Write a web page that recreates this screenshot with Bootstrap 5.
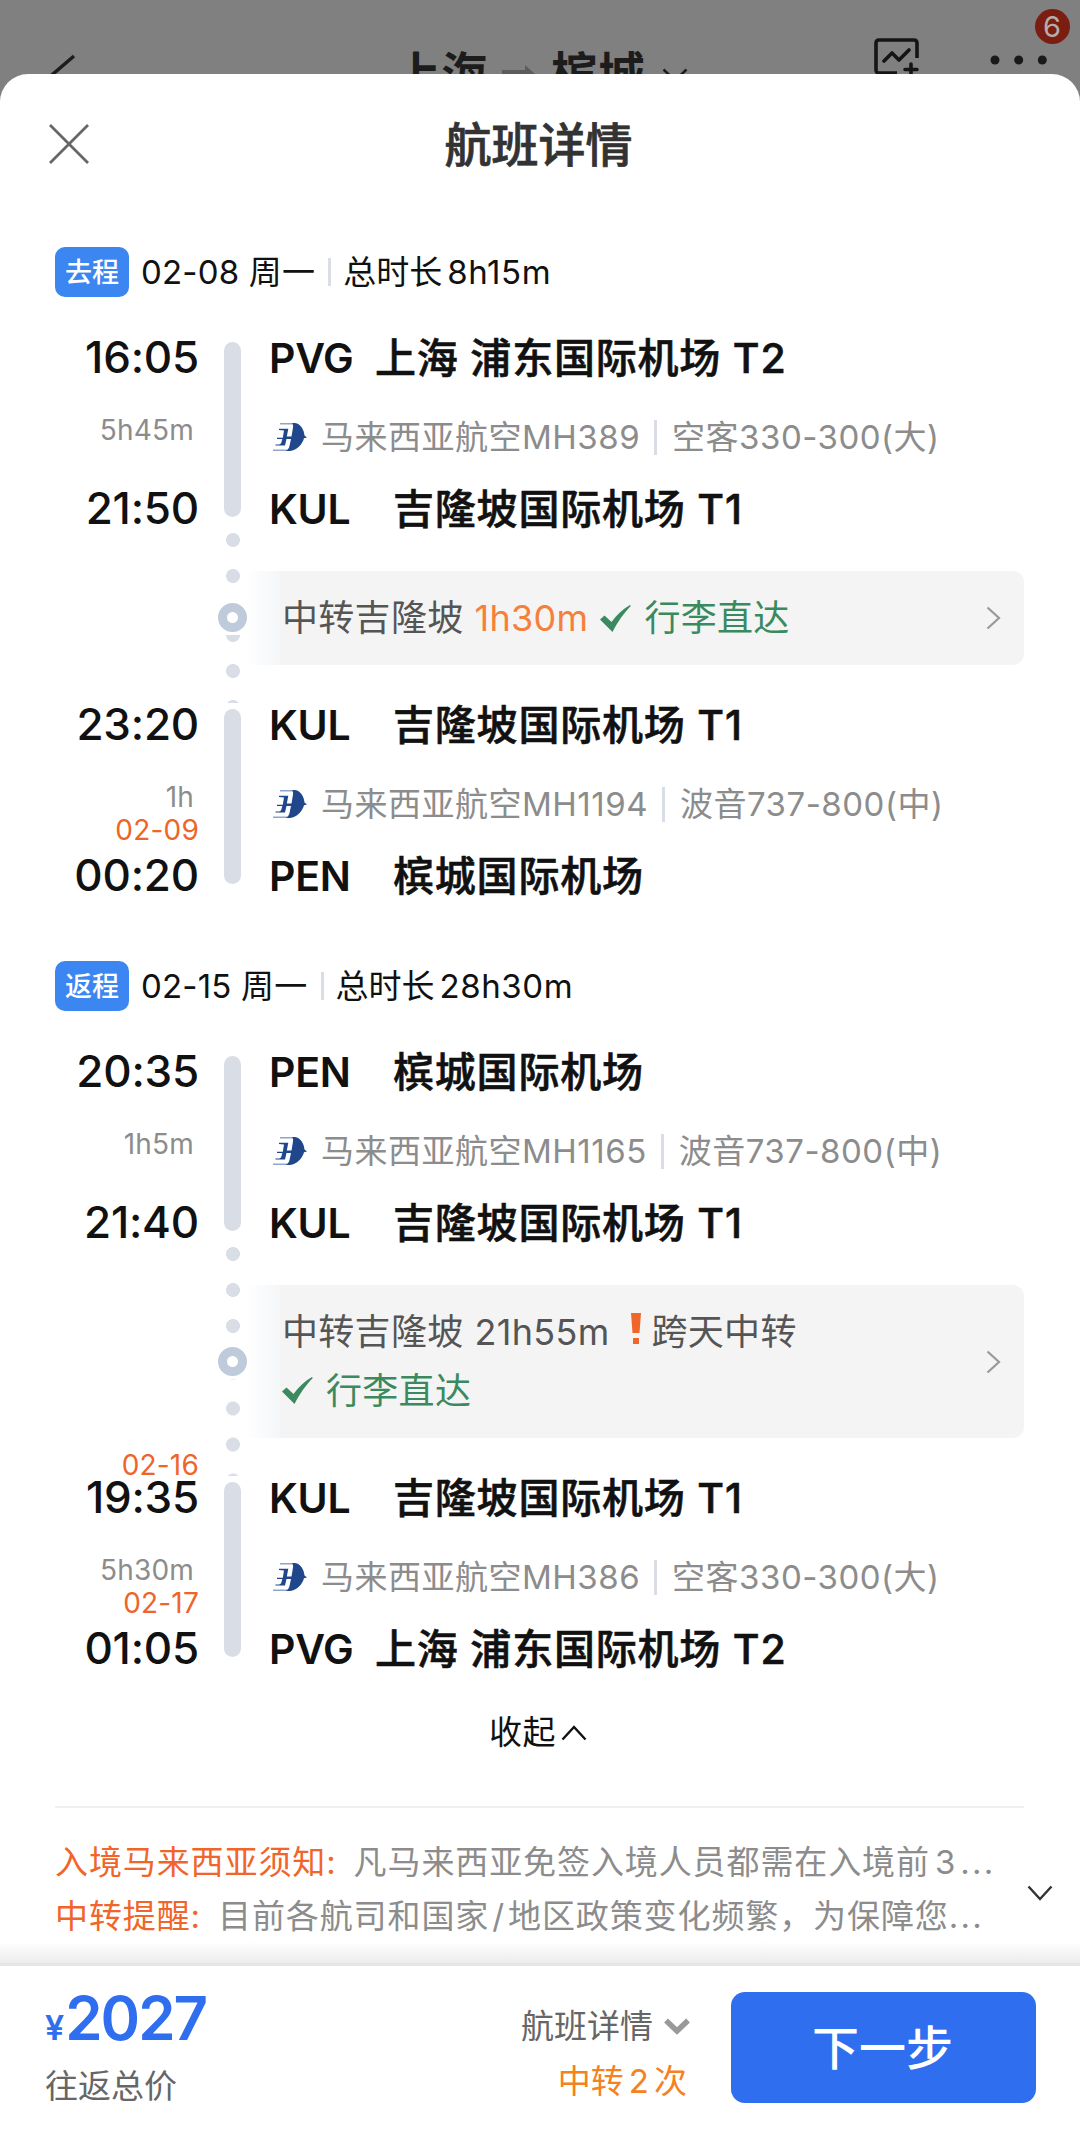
<!DOCTYPE html>
<html lang="zh-CN">
<head>
<meta charset="utf-8">
<meta name="viewport" content="width=device-width, initial-scale=1">
<title>航班详情</title>
<link href="https://cdn.jsdelivr.net/npm/bootstrap@5.3.0/dist/css/bootstrap.min.css" rel="stylesheet">
<style>
body{background:#808080;font-family:Inter,"Noto Sans CJK SC",sans-serif;color:#111;width:1080px;height:2130px;overflow:hidden;line-height:1}
svg{display:block;flex:none}
.topbar{height:74px}
.back{margin:54px 0 0 49px}
.topbar .route{font-size:47px;line-height:46px;color:#1c1c1c;font-weight:600;padding-top:51px;white-space:nowrap;margin-left:315px}
.to-arrow{margin:14px 15px 0 14px}
.route-caret{margin:17px 0 0 17px}
.watch{margin:37px 63px 0 0}
.more-dots{margin:54px 32px 0 0}
.count-dot{width:35px;height:35px;right:10.5px;top:9px;background:#7b1d10;color:#b5adab;font-size:29px}
.sheet{height:2056px;border-radius:28px 28px 0 0}
.sheet>*{flex-shrink:0}
.sheet-head{height:173px;padding:50px 0 0 49px}
.sheet-title{font-size:47px;font-weight:500;color:#333;line-height:42px;width:982px;padding-right:49px;text-align:center;margin:0 0 0 -17px;-webkit-text-stroke:.7px #333}
.trip-head{height:50px;padding-left:55px;font-size:33px}
.trip-back{margin-top:77px}
.trip-tag{width:74px;height:50px;border-radius:10px;background:#3b86f0;color:#fff;font-size:27px;font-weight:500;margin-right:12px}
.vline{width:3px;height:28px;background:#d9dee6}
.trip-head .vline{margin:0 12px 0 13px}
.day{letter-spacing:.2px}
.total{margin-left:5px;letter-spacing:.6px}
.leg{height:175px}
.leg-first{margin-top:45px}
.time-col{width:199px;font-size:44px;font-weight:500;white-space:nowrap;letter-spacing:-.2px}
.row-a{height:30px;line-height:31px}
.row-b{height:18px;line-height:19px}
.dur{font-size:28px;line-height:33px;font-weight:400;color:#8c8c8c;padding-top:42px;letter-spacing:.2px}
.dur span{padding-right:5px}
.dated{color:#ee6529;display:block}
.rail{width:67px;position:relative;z-index:1}
.bar{width:17px;height:175px;border-radius:9px;background:#d9dee6}
.port{font-size:41px;font-weight:500;padding-left:3px;white-space:nowrap;letter-spacing:.8px;-webkit-text-stroke:.6px #111}
.port.row-a{line-height:32px}
.port.row-b{line-height:20px}
.port b{display:inline-block;font-weight:600;width:106px;letter-spacing:-.3px;-webkit-text-stroke:0}
.port.wide b{width:124px}
.airline{font-size:33px;color:#8c8c8c;padding:3px 0 0 7px;white-space:nowrap;letter-spacing:.5px}
.airline svg{margin-right:14px}
.airline .vline{height:35px;margin:0 15px 0 14px}
.layover{height:192px}
.layover.tall{height:251px}
.dots{width:14px;flex:1 1 0;background-image:radial-gradient(circle at 7px 18px,#d9dee6 6.6px,transparent 7.3px);background-size:14px 36px}
.dots-a{background-position:0 -10px}
.dots-b{background-position:0 calc(100% + 22px)}
.layover .rail{padding:15px 0 6px}
.ring{width:29px;height:29px;border:9px solid #bfcadb;border-radius:50%;margin:3px 0}
.stop-box{margin:54px 56px 44px -21px;padding:0 23px 0 37px;border-radius:0 11px 11px 0;background:linear-gradient(90deg,#fff 0,#f4f6f8 35px,#f4f4f4 35px);font-size:36px;color:#555;white-space:nowrap;letter-spacing:.3px}
.stop-line{height:58px}
.stop-line.upper{margin-top:-2px;height:60px}
.stay{margin-left:11px}
.mid-tick{margin:0 13px 0 12px}
.lead-tick{margin-right:13px}
.bang{margin:-6px 11px 0 21px}
.ok{color:#3b8a5f}
.warm{color:#f5803c}
.over-date{height:33px;font-size:28px;line-height:33px;font-weight:400;letter-spacing:.2px;color:#ee6529}
.fold{font-size:33px;margin-top:57px;height:37px;padding-right:4px;letter-spacing:.6px}
.fold svg{margin-left:5px}
.rule{margin:55px 56px 0 55px;height:2px;background:#f0f0f0}
.notices{font-size:33px;letter-spacing:.9px;line-height:54px;margin-top:27px;padding-left:55px;color:#8c8c8c;white-space:nowrap}
.notices strong{color:#f0652a;font-weight:400;margin-right:17px}
.notices i{font-style:normal;margin:0 4px 0 5px}
.notices i.cut{margin:0 3px}
.notices u{text-decoration:none;letter-spacing:2.2px}
.open-caret{margin:7px 27px 0 0}
.fade-strip{height:21px;margin-top:-1px;background:linear-gradient(#fff,#ececec)}
.footbar{height:167px;border-top:3px solid #e6e6e6;font-size:33px;color:#666}
.total-box{padding:30px 0 0 45px}
.price{color:#2f6eee;font-size:60px;font-weight:600;line-height:44px;letter-spacing:-2px}
.price small{font-size:34px;font-weight:600;margin-right:3px}
.price-note{margin-top:20px}
.flight-box{padding-top:44px}
.flight-box svg{margin-left:11px}
.transfers{margin:22px 3px 0 0;color:#f58220}
.transfers i{font-style:normal;margin:0 5px}
.go{width:305px;height:111px;border-radius:14px;background:#2f6eee;color:#fff;font-size:47px;font-weight:500;line-height:1;margin:26px 44px 0 41px;padding-right:2px!important}
</style>
</head>
<body>
<svg width="0" height="0" class="position-absolute"><defs>
<symbol id="mh" viewBox="0 0 34 28"><path fill="#8fa6cc" d="M7 0h14v1.6H7zM0 26.4h14V28H0z"/><path fill="#20478c" d="M19 0h3c6 1 9 7 9.500 12.500L34 14.500l-3 .8C29.500 21 24 27.500 17 28h-4c2-1.500 3-3 3.500-5l1.500-7h-4.500l-1.500 6.500H2.500v-1h3.500c1.500 0 2-1 2.500-2.500l.8-3H4v-1.300h5.800L11 7.500 6 7V5.800h9.300L13.800 13.500h4.700L20 4.500C20.300 2.500 20 1 19 0z"/></symbol>
<symbol id="tick" viewBox="0 0 31 27"><path fill="currentColor" d="M0 14.500 4.500 10.500 11.500 17C17 9.500 23 4 30 0l.8 1C24.500 7.500 18 16 12.500 27z"/></symbol>
<symbol id="more" viewBox="0 0 15 24"><path d="M1.500 1.500 13 12 1.500 22.500" fill="none" stroke="#999" stroke-width="2.200"/></symbol>
</defs></svg>

<header class="topbar position-relative overflow-hidden d-flex">
<svg class="back" width="30" height="34" viewBox="0 0 30 34"><path d="M25 2 4 20l21 18" fill="none" stroke="#1c1c1c" stroke-width="3.500"/></svg>
<div class="route d-flex">上海<svg class="to-arrow" width="34" height="24" viewBox="0 0 34 24"><path d="M0 5h23V0l11 10-11 10v-5H0z" fill="#5c5c5c"/></svg>槟城<svg class="route-caret" width="26" height="16" viewBox="0 0 26 16"><path d="m1.500 1.500 11.500 11 11.500-11" fill="none" stroke="#1c1c1c" stroke-width="2.500"/></svg></div>
<svg class="watch ms-auto" width="48" height="48" viewBox="0 0 48 48" fill="none" stroke="#151515" stroke-width="3.600" stroke-linecap="round" stroke-linejoin="round"><path d="M44 21V6q0-3-3-3H6Q3 3 3 6v27q0 3 3 3h18" stroke-linecap="butt"/><path d="m11 24 8-8 7 7 10-10M38 27v12M32 32.500h12"/></svg>
<svg class="more-dots" width="64" height="12" viewBox="0 0 64 12" fill="#1a1a1a"><circle cx="11" cy="6" r="4.500"/><circle cx="34.700" cy="6" r="4.500"/><circle cx="58.300" cy="6" r="4.500"/></svg>
<span class="count-dot position-absolute rounded-circle d-flex align-items-center justify-content-center">6</span>
</header>

<main class="sheet bg-white d-flex flex-column">
<div class="sheet-head d-flex">
<svg width="40" height="40" viewBox="0 0 40 40"><path d="M1 1l38 38M39 1 1 39" stroke="#666" stroke-width="2.800"/></svg>
<h1 class="sheet-title">航班详情</h1>
</div>

<section>
<div class="trip-head d-flex align-items-center"><span class="trip-tag d-flex align-items-center justify-content-center">去程</span><span class="day">02-08 周一</span><i class="vline"></i><span>总时长</span><span class="total">8h15m</span></div>

<div class="leg leg-first d-flex">
<div class="time-col text-end d-flex flex-column"><div class="row-a">16:05</div><div class="dur flex-grow-1"><span>5h45m</span></div><div class="row-b">21:50</div></div>
<div class="rail d-flex justify-content-center"><i class="bar"></i></div>
<div class="flex-grow-1 d-flex flex-column"><div class="port row-a"><b>PVG</b>上海 浦东国际机场 T2</div><div class="airline flex-grow-1 d-flex align-items-center"><svg width="34" height="28"><use href="#mh"/></svg>马来西亚航空MH389<i class="vline"></i>空客330-300(大)</div><div class="port wide row-b"><b>KUL</b>吉隆坡国际机场 T1</div></div>
</div>

<div class="layover d-flex">
<div class="time-col"></div>
<div class="rail d-flex flex-column align-items-center"><i class="dots dots-a"></i><i class="ring"></i><i class="dots dots-b"></i></div>
<div class="stop-box flex-grow-1 d-flex align-items-center justify-content-between"><div class="stop-line d-flex align-items-center">中转吉隆坡<span class="stay warm">1h30m</span><svg class="ok mid-tick" width="31" height="27"><use href="#tick"/></svg><span class="ok">行李直达</span></div><svg width="15" height="24"><use href="#more"/></svg></div>
</div>

<div class="leg d-flex">
<div class="time-col text-end d-flex flex-column"><div class="row-a">23:20</div><div class="dur flex-grow-1"><span>1h</span><em class="dated fst-normal">02-09</em></div><div class="row-b">00:20</div></div>
<div class="rail d-flex justify-content-center"><i class="bar"></i></div>
<div class="flex-grow-1 d-flex flex-column"><div class="port wide row-a"><b>KUL</b>吉隆坡国际机场 T1</div><div class="airline flex-grow-1 d-flex align-items-center"><svg width="34" height="28"><use href="#mh"/></svg>马来西亚航空MH1194<i class="vline"></i>波音737-800(中)</div><div class="port wide row-b"><b>PEN</b>槟城国际机场</div></div>
</div>
</section>

<section class="trip-back">
<div class="trip-head d-flex align-items-center"><span class="trip-tag d-flex align-items-center justify-content-center">返程</span><span class="day">02-15 周一</span><i class="vline"></i><span>总时长</span><span class="total">28h30m</span></div>

<div class="leg leg-first d-flex">
<div class="time-col text-end d-flex flex-column"><div class="row-a">20:35</div><div class="dur flex-grow-1"><span>1h5m</span></div><div class="row-b">21:40</div></div>
<div class="rail d-flex justify-content-center"><i class="bar"></i></div>
<div class="flex-grow-1 d-flex flex-column"><div class="port wide row-a"><b>PEN</b>槟城国际机场</div><div class="airline flex-grow-1 d-flex align-items-center"><svg width="34" height="28"><use href="#mh"/></svg>马来西亚航空MH1165<i class="vline"></i>波音737-800(中)</div><div class="port wide row-b"><b>KUL</b>吉隆坡国际机场 T1</div></div>
</div>

<div class="layover tall d-flex">
<div class="time-col d-flex flex-column justify-content-end text-end"><div class="over-date">02-16</div></div>
<div class="rail d-flex flex-column align-items-center"><i class="dots dots-a"></i><i class="ring"></i><i class="dots dots-b"></i></div>
<div class="stop-box flex-grow-1 d-flex align-items-center justify-content-between"><div><div class="stop-line upper d-flex align-items-center">中转吉隆坡<span class="stay">21h55m</span><svg class="bang" width="10" height="32" viewBox="0 0 10 32" fill="#f0652a"><path d="M0 0h10L8.500 20h-7zM2 25h6v6H2z"/></svg>跨天中转</div><div class="stop-line d-flex align-items-center ok"><svg class="lead-tick" width="31" height="27"><use href="#tick"/></svg>行李直达</div></div><svg width="15" height="24"><use href="#more"/></svg></div>
</div>

<div class="leg d-flex">
<div class="time-col text-end d-flex flex-column"><div class="row-a">19:35</div><div class="dur flex-grow-1"><span>5h30m</span><em class="dated fst-normal">02-17</em></div><div class="row-b">01:05</div></div>
<div class="rail d-flex justify-content-center"><i class="bar"></i></div>
<div class="flex-grow-1 d-flex flex-column"><div class="port wide row-a"><b>KUL</b>吉隆坡国际机场 T1</div><div class="airline flex-grow-1 d-flex align-items-center"><svg width="34" height="28"><use href="#mh"/></svg>马来西亚航空MH386<i class="vline"></i>空客330-300(大)</div><div class="port row-b"><b>PVG</b>上海 浦东国际机场 T2</div></div>
</div>
</section>

<div class="fold d-flex align-items-center justify-content-center">收起<svg width="26" height="16" viewBox="0 0 26 16"><path d="M1.500 14.500 13 2l11.500 12.500" fill="none" stroke="#111" stroke-width="2.400"/></svg></div>
<div class="rule"></div>
<div class="notices d-flex align-items-center">
<div><div><strong>入境马来西亚须知:</strong>凡马来西亚免签入境人员都需在入境前<i>3</i><u>...</u></div><div><strong>中转提醒:</strong>目前各航司和国家<i class="cut">/</i>地区政策变化频繁，为保障您<u>...</u></div></div>
<svg class="open-caret ms-auto" width="26" height="16" viewBox="0 0 26 16"><path d="M1.500 1.500 13 14 24.500 1.500" fill="none" stroke="#333" stroke-width="2.400"/></svg>
</div>
<div class="fade-strip"></div>

<footer class="footbar d-flex">
<div class="total-box"><div class="price"><small>¥</small>2027</div><div class="price-note">往返总价</div></div>
<div class="flight-box ms-auto d-flex flex-column align-items-end"><div class="d-flex align-items-center">航班详情<svg width="26" height="17" viewBox="0 0 26 17"><path d="m2 2.500 11 10.500 11-10.500" fill="none" stroke="#999" stroke-width="5.500"/></svg></div><div class="transfers">中转<i>2</i>次</div></div>
<button class="go btn p-0 d-flex align-items-center justify-content-center">下一步</button>
</footer>
</main>
<script src="https://cdn.jsdelivr.net/npm/bootstrap@5.3.0/dist/js/bootstrap.bundle.min.js"></script>
</body>
</html>
